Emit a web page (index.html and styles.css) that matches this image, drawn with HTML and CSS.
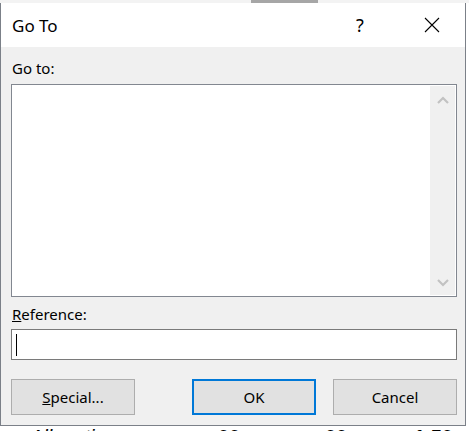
FILE: index.html
```html
<!DOCTYPE html>
<html lang="en">

<head>
    <meta charset="UTF-8">
    <meta name="viewport" content="width=device-width, initial-scale=1.0">
    <title>Go To</title>
    <link rel="stylesheet" href="styles.css">
</head>

<body>
    <div class="sheet-top">
        <span class="cell-tab"></span>
    </div>

    <div class="dialog">
        <div class="titlebar">
            <span class="title">Go To</span>
            <span class="help">?</span>
            <span class="close">
                <svg width="16" height="16" viewBox="0 0 16 16">
                    <path d="M1 1 L15 15 M15 1 L1 15" stroke="#000" stroke-width="1.1" fill="none" />
                </svg>
            </span>
        </div>

        <div class="content">
            <label class="label">Go to:</label>
            <div class="listbox">
                <div class="list-items"></div>
                <div class="scrollbar">
                    <svg width="12" height="8" viewBox="0 0 12 8">
                        <path d="M1 7 L6 2 L11 7" stroke="#c2c2c2" stroke-width="2.2" fill="none" />
                    </svg>
                    <svg width="12" height="8" viewBox="0 0 12 8">
                        <path d="M1 1 L6 6 L11 1" stroke="#c2c2c2" stroke-width="2.2" fill="none" />
                    </svg>
                </div>
            </div>

            <label class="label ref-label"><u>R</u>eference:</label>
            <div class="textbox"><span class="caret"></span></div>

            <div class="buttons">
                <button class="btn"><u>S</u>pecial...</button>
                <span class="spacer"></span>
                <button class="btn btn-default">OK</button>
                <button class="btn">Cancel</button>
            </div>
        </div>
    </div>

    <div class="sheet-bottom">
        <span class="cut cut-a">Allocation</span>
        <span class="cut cut-b">00</span>
        <span class="cut cut-c">00</span>
        <span class="cut cut-d">1.50</span>
    </div>
</body>

</html>
```

FILE: styles.css
```css
body {
    margin: 0;
    width: 469px;
    height: 431px;
    overflow: hidden;
    background: #ffffff;
    font-family: "Noto Sans", "Open Sans", sans-serif;
    color: #000;
}
.sheet-top {
    height: 3px;
    background: #f3f3f3;
    display: flex;
}
.cell-tab {
    margin-left: 251px;
    width: 67px;
    height: 3px;
    background: #a6a6a6;
}
.dialog {
    width: 464px;
    border-left: 1px solid #7b8088;
    border-right: 1px solid #7b8088;
    border-bottom: 1px solid #7b8088;
    background: #f0f0f0;
}
.titlebar {
    height: 44px;
    background: #ffffff;
    display: flex;
    align-items: center;
}
.title {
    font-size: 17px;
    margin-left: 11px;
    flex: 1;
}
.help {
    font-size: 18px;
    width: 20px;
    margin-right: 54px;
    text-align: center;
}
.close {
    display: flex;
    margin-right: 25px;
}
.content {
    padding: 12px 8px 10px 10px;
    display: flex;
    flex-direction: column;
}
.label {
    font-size: 15px;
    line-height: 19px;
    margin-left: 1px;
}
.listbox {
    margin-top: 6px;
    height: 211px;
    border: 1px solid #828790;
    background: #ffffff;
    display: flex;
}
.list-items {
    flex: 1;
}
.scrollbar {
    width: 25px;
    margin: 1px 1px 1px 0;
    background: #f0f0f0;
    display: flex;
    flex-direction: column;
    justify-content: space-between;
    align-items: center;
    padding: 10px 0 8px;
}
.ref-label {
    margin-top: 8px;
}
.textbox {
    margin-top: 5px;
    height: 29px;
    border: 1px solid #7a7a7a;
    background: #ffffff;
    display: flex;
    align-items: center;
}
.caret {
    margin-left: 4px;
    width: 1px;
    height: 22px;
    background: #000;
}
.buttons {
    margin-top: 19px;
    display: flex;
    gap: 17px;
}
.spacer {
    flex: 1;
}
.btn {
    width: 124px;
    height: 36px;
    font-family: "Noto Sans", "Open Sans", sans-serif;
    font-size: 15px;
    background: #e1e1e1;
    border: 1px solid #adadad;
    padding: 0;
    color: #000;
}
.btn-default {
    border: 2px solid #0078d7;
}
.sheet-bottom {
    height: 5px;
    overflow: hidden;
    position: relative;
    background: #ffffff;
}
.cut {
    position: absolute;
    top: 1px;
    font-family: "Liberation Sans", sans-serif;
    font-size: 20px;
    line-height: 20px;
}
.cut-a { left: 30px; font-style: italic; }
.cut-b { left: 218px; font-weight: bold; }
.cut-c { left: 325px; font-weight: bold; }
.cut-d { left: 414px; font-weight: bold; }
```
